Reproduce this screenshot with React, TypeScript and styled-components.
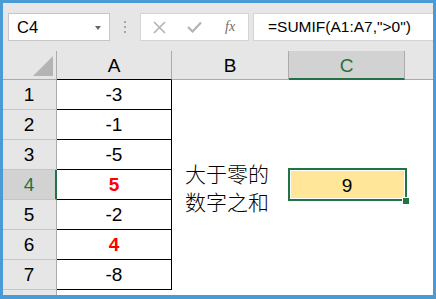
import styled, { createGlobalStyle } from "styled-components";

const GlobalStyle = createGlobalStyle`
  html, body {
    margin: 0;
    padding: 0;
    overflow: hidden;
  }
  * {
    box-sizing: border-box;
  }
`;

const GREEN = "#217346";
const HEADER_BG = "#e6e6e6";
const HEADER_SEL = "#d2d2d2";
const HEADER_LINE = "#ababab";

const Frame = styled.div`
  width: 436px;
  height: 299px;
  border: 3px solid #4a9bd5;
  border-bottom-width: 4px;
  background: ${HEADER_BG};
  display: flex;
  flex-direction: column;
  overflow: hidden;
  font-family: "Liberation Sans", Arial, sans-serif;
`;

const FormulaBar = styled.div`
  height: 48px;
  display: flex;
  align-items: flex-start;
  padding: 10px 0 0 5px;
`;

const NameBox = styled.div`
  width: 102px;
  height: 28px;
  background: #fff;
  border: 1px solid #c6c6c6;
  display: flex;
  align-items: center;
  justify-content: space-between;
  padding: 0 8px 0 8px;
  font-size: 16.5px;
  color: #000;
`;

const DropArrow = styled.span`
  width: 0;
  height: 0;
  border-left: 3.5px solid transparent;
  border-right: 3.5px solid transparent;
  border-top: 4px solid #666;
  margin-top: 1px;
`;

const Splitter = styled.div`
  width: 30px;
  height: 28px;
  display: flex;
  flex-direction: column;
  align-items: center;
  justify-content: center;
  gap: 3px;
  span {
    width: 2px;
    height: 2px;
    background: #a6a6a6;
  }
`;

const IconBox = styled.div`
  width: 109px;
  height: 28px;
  background: #fff;
  border: 1px solid #d4d4d4;
  display: flex;
  align-items: center;
  padding-left: 12px;
  gap: 21px;
`;

const Fx = styled.span`
  font-family: "Liberation Serif", "Times New Roman", serif;
  font-style: italic;
  font-size: 14px;
  color: #6e6e6e;
  margin-left: 2px;
`;

const FormulaBox = styled.div`
  flex: 1;
  height: 28px;
  margin-left: 4px;
  background: #fff;
  border: 1px solid #d4d4d4;
  border-right: none;
  display: flex;
  align-items: center;
  padding-left: 14px;
  font-size: 15.5px;
  color: #000;
`;

const Sheet = styled.div`
  flex: 1;
  display: grid;
  grid-template-columns: 54px 115px 117px 116px 1fr;
  grid-template-rows: 29px repeat(7, 30px) 1fr;
  background: #fff;
  font-size: 19px;
`;

const Corner = styled.div`
  background: ${HEADER_BG};
  border-right: 1px solid ${HEADER_LINE};
  border-bottom: 1px solid ${HEADER_LINE};
  display: flex;
  align-items: flex-end;
  justify-content: flex-end;
  padding: 0 3px 3px 0;
`;

const CornerMark = styled.span`
  width: 20px;
  height: 20px;
  background: #b4b4b4;
  clip-path: polygon(100% 0, 100% 100%, 0 100%);
`;

const ColHeader = styled.div<{ $selected?: boolean; $dark?: boolean; $last?: boolean }>`
  background: ${(p) => (p.$selected ? HEADER_SEL : HEADER_BG)};
  border-right: ${(p) => (p.$last ? "none" : `1px solid ${HEADER_LINE}`)};
  border-bottom: ${(p) =>
    p.$selected ? `2px solid ${GREEN}` : `1px solid ${p.$dark ? "#000" : HEADER_LINE}`};
  color: ${(p) => (p.$selected ? GREEN : "#000")};
  display: flex;
  align-items: center;
  justify-content: center;
  padding-top: 2px;
`;

const RowHeader = styled.div<{ $selected?: boolean }>`
  background: ${(p) => (p.$selected ? HEADER_SEL : HEADER_BG)};
  border-right: ${(p) => (p.$selected ? `2px solid ${GREEN}` : `1px solid ${HEADER_LINE}`)};
  border-bottom: 1px solid #c6c6c6;
  color: ${(p) => (p.$selected ? GREEN : "#000")};
  display: flex;
  align-items: center;
  justify-content: center;
  padding-right: ${(p) => (p.$selected ? "0" : "1px")};
`;

const ValueCell = styled.div<{ $highlight?: boolean }>`
  border-right: 1px solid #000;
  border-bottom: 1px solid #000;
  display: flex;
  align-items: center;
  justify-content: center;
  color: ${(p) => (p.$highlight ? "#ff0000" : "#000")};
  font-weight: ${(p) => (p.$highlight ? 700 : 400)};
`;

const Blank = styled.div``;

const LabelCell = styled.div`
  position: relative;
  z-index: 1;
  display: flex;
  align-items: center;
  padding-left: 13px;
`;

const Label = styled.div`
  font-family: "Noto Sans CJK SC", sans-serif;
  font-size: 21px;
  font-weight: 300;
  line-height: 28px;
  color: #000;
  white-space: nowrap;
  margin-top: 3px;
`;

const ResultCell = styled.div`
  position: relative;
  background: #ffe699;
  display: flex;
  align-items: center;
  justify-content: center;
  padding-top: 2px;
`;

const Selection = styled.div`
  position: absolute;
  top: -2px;
  left: -1px;
  right: -2px;
  bottom: -1px;
  border: 2px solid ${GREEN};
  box-shadow: inset 0 0 0 1px #fff;
  pointer-events: none;
`;

const FillHandle = styled.span`
  position: absolute;
  right: -4px;
  bottom: -4px;
  width: 6px;
  height: 6px;
  background: ${GREEN};
  outline: 1px solid #fff;
`;

const FillerHeader = styled.div`
  background: ${HEADER_BG};
  border-right: 1px solid ${HEADER_LINE};
`;

const values = [-3, -1, -5, 5, -2, 4, -8];

function App() {
  return (
    <>
      <GlobalStyle />
      <Frame>
        <FormulaBar>
          <NameBox>
            C4
            <DropArrow />
          </NameBox>
          <Splitter>
            <span />
            <span />
            <span />
          </Splitter>
          <IconBox>
            <svg width="13" height="13" viewBox="0 0 13 13">
              <path d="M1 1 L12 12 M12 1 L1 12" stroke="#b3b3b3" strokeWidth="1.6" />
            </svg>
            <svg width="15" height="12" viewBox="0 0 15 12">
              <path d="M1 6 L5.5 10.5 L14 1.5" stroke="#b3b3b3" strokeWidth="2.2" fill="none" />
            </svg>
            <Fx>fx</Fx>
          </IconBox>
          <FormulaBox>=SUMIF(A1:A7,"&gt;0")</FormulaBox>
        </FormulaBar>
        <Sheet>
          <Corner>
            <CornerMark />
          </Corner>
          <ColHeader $dark>A</ColHeader>
          <ColHeader>B</ColHeader>
          <ColHeader $selected>C</ColHeader>
          <ColHeader $last />
          {values.map((v, i) => {
            const row = i + 1;
            return [
              <RowHeader key={`h${row}`} $selected={row === 4}>
                {row}
              </RowHeader>,
              <ValueCell key={`a${row}`} $highlight={v > 0}>
                {v}
              </ValueCell>,
              row === 4 ? (
                <LabelCell key={`b${row}`}>
                  <Label>
                    大于零的
                    <br />
                    数字之和
                  </Label>
                </LabelCell>
              ) : (
                <Blank key={`b${row}`} />
              ),
              row === 4 ? (
                <ResultCell key={`c${row}`}>
                  9
                  <Selection />
                  <FillHandle />
                </ResultCell>
              ) : (
                <Blank key={`c${row}`} />
              ),
              <Blank key={`d${row}`} />,
            ];
          })}
          <FillerHeader />
        </Sheet>
      </Frame>
    </>
  );
}

export default App;
